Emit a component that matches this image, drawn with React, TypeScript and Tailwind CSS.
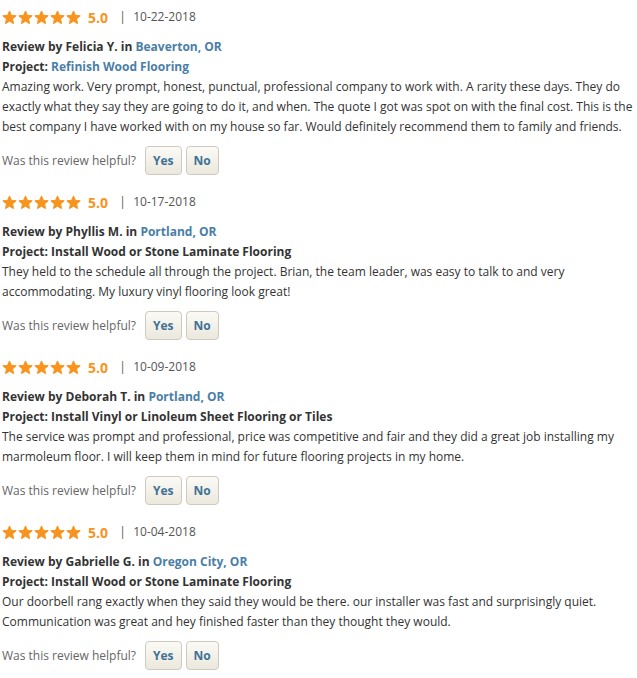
import React from "react";

type Review = {
  date: string;
  name: string;
  location: string;
  project: string;
  projectLink?: boolean;
  body: string;
};

const reviews: Review[] = [
  {
    date: "10-22-2018",
    name: "Felicia Y.",
    location: "Beaverton, OR",
    project: "Refinish Wood Flooring",
    projectLink: true,
    body: "Amazing work. Very prompt, honest, punctual, professional company to work with. A rarity these days. They do exactly what they say they are going to do it, and when. The quote I got was spot on with the final cost. This is the best company I have worked with on my house so far. Would definitely recommend them to family and friends.",
  },
  {
    date: "10-17-2018",
    name: "Phyllis M.",
    location: "Portland, OR",
    project: "Install Wood or Stone Laminate Flooring",
    body: "They held to the schedule all through the project. Brian, the team leader, was easy to talk to and very accommodating. My luxury vinyl flooring look great!",
  },
  {
    date: "10-09-2018",
    name: "Deborah T.",
    location: "Portland, OR",
    project: "Install Vinyl or Linoleum Sheet Flooring or Tiles",
    body: "The service was prompt and professional, price was competitive and fair and they did a great job installing my marmoleum floor. I will keep them in mind for future flooring projects in my home.",
  },
  {
    date: "10-04-2018",
    name: "Gabrielle G.",
    location: "Oregon City, OR",
    project: "Install Wood or Stone Laminate Flooring",
    body: "Our doorbell rang exactly when they said they would be there. our installer was fast and surprisingly quiet. Communication was great and hey finished faster than they thought they would.",
  },
];

function Star() {
  return (
    <svg width="15" height="15" viewBox="0 0 24 24" className="shrink-0">
      <path
        d="M12 1.5l3.1 7 7.6.7-5.8 5.1 1.7 7.5L12 17.9l-6.6 3.9 1.7-7.5L1.3 9.2l7.6-.7z"
        fill="#f7941d"
        stroke="#f7941d"
        strokeWidth="1.5"
        strokeLinejoin="round"
      />
    </svg>
  );
}

function HelpButton({ label }: { label: string }) {
  return (
    <button className="h-[29px] rounded-[4px] border border-[#cfcac0] bg-gradient-to-b from-[#fbfaf6] to-[#ebe8dd] px-[7px] text-[12px] font-bold text-[#3f7296]">
      {label}
    </button>
  );
}

function ReviewItem({ r }: { r: Review }) {
  return (
    <div className="pb-[15px]">
      <div className="flex h-[24px] items-center">
        <div className="flex gap-[1px]">
          {[0, 1, 2, 3, 4].map((i) => (
            <Star key={i} />
          ))}
        </div>
        <span className="ml-[7px] text-[14px] font-bold text-[#f7941d]">5.0</span>
        <span className="ml-[11px] text-[13px] text-[#666]">|</span>
        <span className="ml-[7px] text-[12px] text-[#555]">{r.date}</span>
      </div>
      <div className="mt-[8px] text-[12px] leading-[20px] text-[#333]">
        <p className="font-bold">
          Review by {r.name} in{" "}
          <a className="text-[#4a7ea6]">{r.location}</a>
        </p>
        <p className="font-bold">
          Project:{" "}
          {r.projectLink ? (
            <a className="text-[#4a7ea6]">{r.project}</a>
          ) : (
            r.project
          )}
        </p>
        <p>{r.body}</p>
      </div>
      <div className="mt-[9px] flex items-center">
        <span className="mr-[9px] text-[12px] text-[#666]">Was this review helpful?</span>
        <div className="flex gap-[4px]">
          <HelpButton label="Yes" />
          <HelpButton label="No" />
        </div>
      </div>
    </div>
  );
}

export default function App() {
  return (
    <div
      className="min-h-[678px] w-[637px] bg-white pl-[2px] pt-[5px]"
      style={{ fontFamily: '"Open Sans", "Noto Sans", sans-serif' }}
    >
      {reviews.map((r) => (
        <ReviewItem key={r.date} r={r} />
      ))}
    </div>
  );
}
